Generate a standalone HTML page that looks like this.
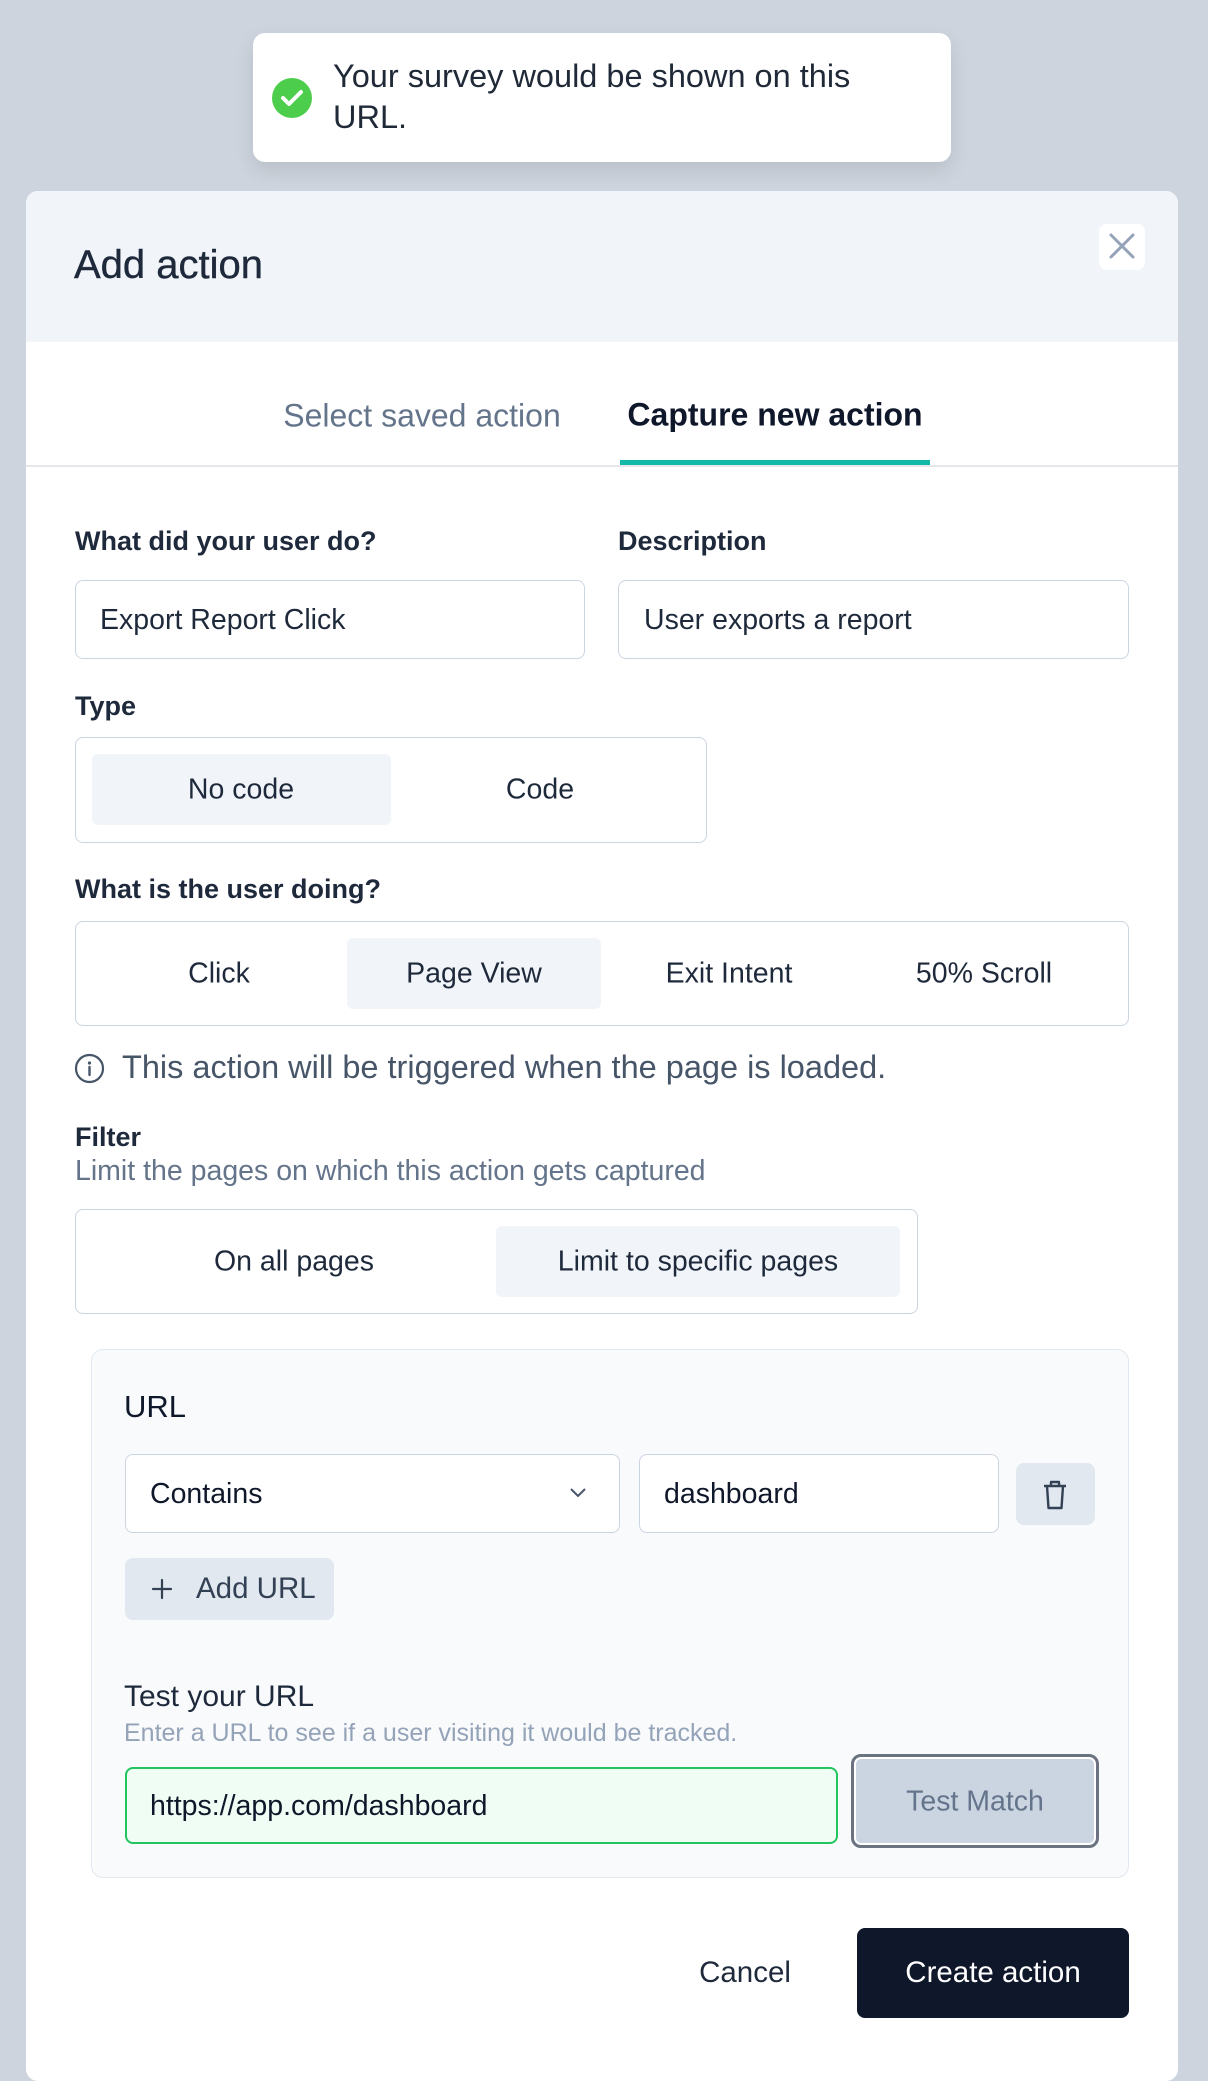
<!DOCTYPE html>
<html><head><meta charset="utf-8"><style>
*{box-sizing:border-box;margin:0;padding:0}
body{width:1208px;height:2064px;overflow:hidden;background:#cdd4dd;font-family:"Liberation Sans",sans-serif;color:#0f172a;position:relative}
.a{position:absolute}
.t{position:absolute;white-space:nowrap}
.box{position:absolute;border:1.5px solid #cbd5e1;border-radius:8px;background:#fff}
.sel{position:absolute;background:#f1f5f9;border-radius:6px}
.lbl{font-size:27px;font-weight:bold;color:#1e293b}
.c{transform:translate(-50%,-50%)}
.f{font-size:28.5px;color:#1e293b}
</style></head><body>
<div class="a" style="left:253px;top:33px;width:698px;height:129px;background:#fff;border-radius:12px;box-shadow:0 8px 20px rgba(0,0,0,.1)"></div>
<svg class="a" style="left:271px;top:77px" width="42" height="42" viewBox="0 0 42 42"><circle cx="21" cy="21" r="20" fill="#4ccd4c"/><path d="M12 21l6 6 12-12" stroke="#fff" stroke-width="4" fill="none" stroke-linecap="round" stroke-linejoin="round"/></svg>
<div class="t" style="left:333px;top:56px;font-size:32.5px;line-height:41px;color:#1f2937">Your survey would be shown on this<br>URL.</div>

<div class="a" style="left:26px;top:191px;width:1152px;height:1890px;background:#fff;border-radius:12px;overflow:hidden">
<div class="a" style="left:0;top:0;width:100%;height:151px;background:#f1f5f9"></div>
</div>
<div class="t" style="left:74px;top:243px;font-size:40px;color:#1e293b;-webkit-text-stroke:0.4px #1e293b">Add action</div>
<div class="a" style="left:1099px;top:224px;width:46px;height:46px;background:#fff;border-radius:8px"></div>
<svg class="a" style="left:1107px;top:231px" width="30" height="30" viewBox="0 0 30 30"><path d="M4 4L26 26M26 4L4 26" stroke="#94a3b8" stroke-width="3" stroke-linecap="round"/></svg>

<div class="t c" style="left:422px;top:416px;font-size:32px;color:#64748b">Select saved action</div>
<div class="t c" style="left:775px;top:415px;font-size:32px;font-weight:bold;color:#0f172a">Capture new action</div>
<div class="a" style="left:26px;top:465px;width:1152px;height:2px;background:#e5e7eb"></div>
<div class="a" style="left:620px;top:460px;width:310px;height:5px;background:#14b8a6"></div>

<div class="t lbl" style="left:75px;top:526px">What did your user do?</div>
<div class="t lbl" style="left:618px;top:526px">Description</div>
<div class="box" style="left:75px;top:580px;width:510px;height:79px"></div>
<div class="t f" style="left:100px;top:604px">Export Report Click</div>
<div class="box" style="left:618px;top:580px;width:511px;height:79px"></div>
<div class="t f" style="left:644px;top:604px">User exports a report</div>

<div class="t lbl" style="left:75px;top:691px">Type</div>
<div class="box" style="left:75px;top:737px;width:632px;height:106px"></div>
<div class="sel" style="left:92px;top:754px;width:299px;height:71px"></div>
<div class="t c f" style="left:241px;top:790px">No code</div>
<div class="t c f" style="left:540px;top:790px">Code</div>

<div class="t lbl" style="left:75px;top:874px">What is the user doing?</div>
<div class="box" style="left:75px;top:921px;width:1054px;height:105px"></div>
<div class="sel" style="left:347px;top:938px;width:254px;height:71px"></div>
<div class="t c f" style="left:219px;top:974px">Click</div>
<div class="t c f" style="left:474px;top:974px">Page View</div>
<div class="t c f" style="left:729px;top:974px">Exit Intent</div>
<div class="t c f" style="left:984px;top:974px">50% Scroll</div>

<svg class="a" style="left:74px;top:1053px" width="31" height="31" viewBox="0 0 31 31"><circle cx="15.5" cy="15.5" r="13.5" fill="none" stroke="#475569" stroke-width="2.2"/><path d="M15.5 14v8" stroke="#475569" stroke-width="2.4" stroke-linecap="round"/><circle cx="15.5" cy="10" r="1.6" fill="#475569"/></svg>
<div class="t" style="left:122px;top:1049px;font-size:32.5px;color:#475569">This action will be triggered when the page is loaded.</div>

<div class="t lbl" style="left:75px;top:1122px">Filter</div>
<div class="t" style="left:75px;top:1155px;font-size:28.5px;color:#64748b">Limit the pages on which this action gets captured</div>
<div class="box" style="left:75px;top:1209px;width:843px;height:105px"></div>
<div class="sel" style="left:496px;top:1226px;width:404px;height:71px"></div>
<div class="t c f" style="left:294px;top:1262px">On all pages</div>
<div class="t c f" style="left:698px;top:1262px">Limit to specific pages</div>

<div class="a" style="left:91px;top:1349px;width:1038px;height:529px;background:#f8fafc;border:1.5px solid #e2e8f0;border-radius:12px"></div>
<div class="t" style="left:124px;top:1389px;font-size:31px;color:#0f172a">URL</div>
<div class="box" style="left:125px;top:1454px;width:495px;height:79px"></div>
<div class="t" style="left:150px;top:1478px;font-size:28.5px;color:#0f172a">Contains</div>
<svg class="a" style="left:569px;top:1487px" width="18" height="12" viewBox="0 0 18 12"><path d="M2 2l7 7 7-7" stroke="#475569" stroke-width="2" fill="none"/></svg>
<div class="box" style="left:639px;top:1454px;width:360px;height:79px"></div>
<div class="t" style="left:664px;top:1478px;font-size:28.5px;color:#0f172a">dashboard</div>
<div class="a" style="left:1016px;top:1463px;width:79px;height:62px;background:#e2e8f0;border-radius:8px"></div>
<svg class="a" style="left:1041px;top:1479px" width="28" height="32" viewBox="0 0 28 32"><path d="M3 7h22M10 7V3h8v4M6 7l1.5 22h13L22 7" stroke="#334155" stroke-width="2.4" fill="none" stroke-linejoin="round"/></svg>
<div class="a" style="left:125px;top:1558px;width:209px;height:62px;background:#e2e8f0;border-radius:8px"></div>
<svg class="a" style="left:151px;top:1578px" width="22" height="22" viewBox="0 0 22 22"><path d="M11 2v18M2 11h18" stroke="#334155" stroke-width="2.2" stroke-linecap="round"/></svg>
<div class="t" style="left:196px;top:1572px;font-size:29.5px;color:#334155">Add URL</div>

<div class="t" style="left:124px;top:1680px;font-size:30px;color:#1e293b">Test your URL</div>
<div class="t" style="left:124px;top:1719px;font-size:25px;color:#94a3b8">Enter a URL to see if a user visiting it would be tracked.</div>
<div class="a" style="left:125px;top:1767px;width:713px;height:77px;background:#f0fdf4;border:2px solid #22c55e;border-radius:8px"></div>
<div class="t" style="left:150px;top:1790px;font-size:28.5px;color:#0f172a">https://app.com/dashboard</div>
<div class="a" style="left:851px;top:1754px;width:248px;height:94px;background:#cbd5e1;border:3px solid #6b7280;border-radius:10px;box-shadow:inset 0 0 0 2px #fff"></div>
<div class="t c" style="left:975px;top:1802px;font-size:28.5px;color:#64748b">Test Match</div>

<div class="t c" style="left:745px;top:1973px;font-size:29.5px;color:#1e293b">Cancel</div>
<div class="a" style="left:857px;top:1928px;width:272px;height:90px;background:#0f172a;border-radius:8px"></div>
<div class="t c" style="left:993px;top:1973px;font-size:29.5px;color:#fff">Create action</div>
</body></html>
